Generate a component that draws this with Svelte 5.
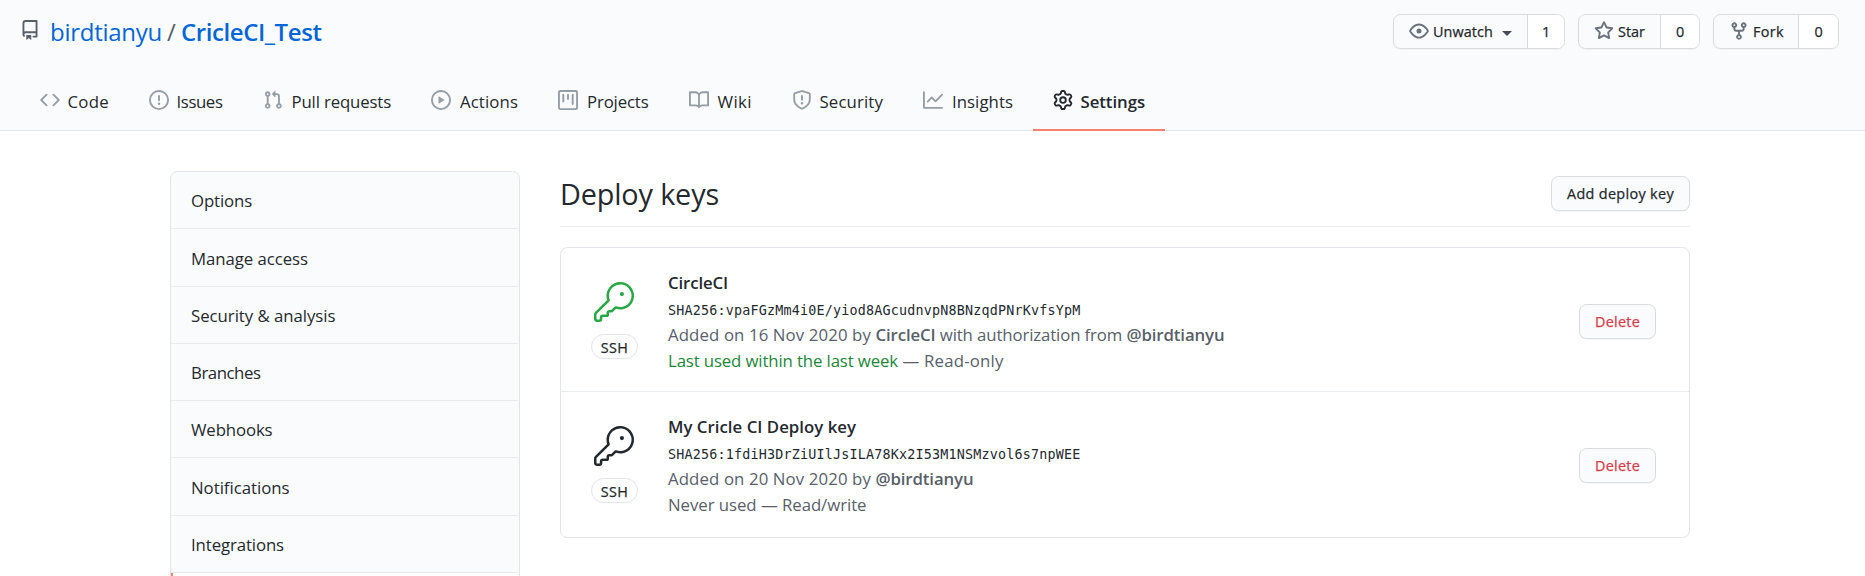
<script>
  // Adjusts tracking so that a label fills the given measure in pixels.
  function fit(node, measure) {
    node.style.letterSpacing = '0px';
    const natural = node.getBoundingClientRect().width;
    const spacing = (measure - natural) / node.textContent.length;
    node.style.letterSpacing = `${spacing.toFixed(4)}px`;
  }

  const icons = {
    repo: 'M2 2.5A2.5 2.5 0 014.5 0h8.75a.75.75 0 01.75.75v12.5a.75.75 0 01-.75.75h-2.5a.75.75 0 110-1.5h1.75v-2h-8a1 1 0 00-.714 1.7.75.75 0 01-1.072 1.05A2.495 2.495 0 012 11.5v-9zm10.5-1V9h-8c-.356 0-.694.074-1 .208V2.5a1 1 0 011-1h8zM5 12.25v3.25a.25.25 0 00.4.2l1.45-1.087a.25.25 0 01.3 0L8.6 15.7a.25.25 0 00.4-.2v-3.25a.25.25 0 00-.25-.25h-3.5a.25.25 0 00-.25.25z',
    code: 'M4.72 3.22a.75.75 0 011.06 1.06L2.06 8l3.72 3.72a.75.75 0 11-1.06 1.06L.47 8.53a.75.75 0 010-1.06l4.25-4.25zm6.56 0a.75.75 0 10-1.06 1.06L13.94 8l-3.72 3.72a.75.75 0 101.06 1.06l4.25-4.25a.75.75 0 000-1.06l-4.25-4.25z',
    issue: 'M8 1.5a6.5 6.5 0 100 13 6.5 6.5 0 000-13zM0 8a8 8 0 1116 0A8 8 0 010 8zm9 3a1 1 0 11-2 0 1 1 0 012 0zm-.25-6.25a.75.75 0 00-1.5 0v3.5a.75.75 0 001.5 0v-3.5z',
    pull: 'M7.177 3.073L9.573.677A.25.25 0 0110 .854v4.792a.25.25 0 01-.427.177L7.177 3.427a.25.25 0 010-.354zM3.75 2.5a.75.75 0 100 1.5.75.75 0 000-1.5zm-2.25.75a2.25 2.25 0 113 2.122v5.256a2.251 2.251 0 11-1.5 0V5.372A2.25 2.25 0 011.5 3.25zM11 2.5h-1V4h1a1 1 0 011 1v5.628a2.251 2.251 0 101.5 0V5A2.5 2.5 0 0011 2.5zm1 10.25a.75.75 0 111.5 0 .75.75 0 01-1.5 0zM3.75 12a.75.75 0 100 1.5.75.75 0 000-1.5z',
    play: 'M1.5 8a6.5 6.5 0 1113 0 6.5 6.5 0 01-13 0zM8 0a8 8 0 100 16A8 8 0 008 0zM6.379 5.227A.25.25 0 006 5.442v5.117a.25.25 0 00.379.214l4.264-2.559a.25.25 0 000-.428L6.379 5.227z',
    project: 'M1.75 0A1.75 1.75 0 000 1.75v12.5C0 15.216.784 16 1.75 16h12.5A1.75 1.75 0 0016 14.25V1.75A1.75 1.75 0 0014.25 0H1.75zM1.5 1.75a.25.25 0 01.25-.25h12.5a.25.25 0 01.25.25v12.5a.25.25 0 01-.25.25H1.75a.25.25 0 01-.25-.25V1.75zM11.75 3a.75.75 0 00-.75.75v7.5a.75.75 0 001.5 0v-7.5a.75.75 0 00-.75-.75zm-8.25.75a.75.75 0 011.5 0v5.5a.75.75 0 01-1.5 0v-5.5zM8 3a.75.75 0 00-.75.75v3.5a.75.75 0 001.5 0v-3.5A.75.75 0 008 3z',
    book: 'M0 1.75A.75.75 0 01.75 1h4.253c1.227 0 2.317.59 3 1.501A3.744 3.744 0 0111.006 1h4.245a.75.75 0 01.75.75v10.5a.75.75 0 01-.75.75h-4.507a2.25 2.25 0 00-1.591.659l-.622.621a.75.75 0 01-1.06 0l-.622-.621A2.25 2.25 0 005.258 13H.75a.75.75 0 01-.75-.75V1.75zm8.755 3a2.25 2.25 0 012.25-2.25H14.5v9h-3.757c-.71 0-1.4.201-1.992.572l.004-7.322zm-1.504 7.324l.004-5.073-.002-2.253A2.25 2.25 0 005.003 2.5H1.5v9h3.757a3.75 3.75 0 011.994.574z',
    shield: 'M7.467.133a1.75 1.75 0 011.066 0l5.25 1.68A1.75 1.75 0 0115 3.48V7c0 1.566-.32 3.182-1.303 4.682-.983 1.498-2.585 2.813-5.032 3.855a1.7 1.7 0 01-1.33 0c-2.447-1.042-4.049-2.357-5.032-3.855C1.32 10.182 1 8.566 1 7V3.48a1.75 1.75 0 011.217-1.667l5.25-1.68zm.61 1.429a.25.25 0 00-.153 0l-5.25 1.68a.25.25 0 00-.174.238V7c0 1.358.275 2.666 1.057 3.86.784 1.194 2.121 2.34 4.366 3.297a.2.2 0 00.154 0c2.245-.956 3.582-2.104 4.366-3.298C13.225 9.666 13.5 8.36 13.5 7V3.48a.25.25 0 00-.174-.237l-5.25-1.68zM9 10.5a1 1 0 11-2 0 1 1 0 012 0zm-.25-5.75a.75.75 0 10-1.5 0v3a.75.75 0 001.5 0v-3z',
    graph: 'M1.5 1.75a.75.75 0 00-1.5 0v12.5c0 .414.336.75.75.75h14.5a.75.75 0 000-1.5H1.5V1.75zm14.28 2.53a.75.75 0 00-1.06-1.06L10 7.94 7.53 5.47a.75.75 0 00-1.06 0L3.22 8.72a.75.75 0 001.06 1.06L7 7.06l2.47 2.47a.75.75 0 001.06 0l5.25-5.25z',
    gear: 'M7.429 1.525a6.593 6.593 0 011.142 0c.036.003.108.036.137.146l.289 1.105c.147.56.55.967.997 1.189.174.086.341.183.501.29.417.278.97.423 1.53.27l1.102-.303c.11-.03.175.016.195.046.219.31.41.641.573.989.014.031.022.11-.059.19l-.815.806c-.411.406-.562.957-.53 1.456a4.588 4.588 0 010 .582c-.032.499.119 1.05.53 1.456l.815.806c.08.08.073.159.059.19a6.494 6.494 0 01-.573.99c-.02.029-.086.074-.195.045l-1.103-.303c-.559-.153-1.112-.008-1.529.27-.16.107-.327.204-.5.29-.449.222-.851.628-.998 1.189l-.289 1.105c-.029.11-.101.143-.137.146a6.613 6.613 0 01-1.142 0c-.036-.003-.108-.037-.137-.146l-.289-1.105c-.147-.56-.55-.967-.997-1.189a4.502 4.502 0 01-.501-.29c-.417-.278-.97-.423-1.53-.27l-1.102.303c-.11.03-.175-.016-.195-.046a6.492 6.492 0 01-.573-.989c-.014-.031-.022-.11.059-.19l.815-.806c.411-.406.562-.957.53-1.456a4.587 4.587 0 010-.582c.032-.499-.119-1.05-.53-1.456l-.815-.806c-.08-.08-.073-.159-.059-.19a6.44 6.44 0 01.573-.99c.02-.029.086-.075.195-.045l1.103.303c.559.153 1.112.008 1.529-.27.16-.107.327-.204.5-.29.449-.222.851-.628.998-1.189l.289-1.105c.029-.11.101-.143.137-.146zM8 0c-.236 0-.47.01-.701.03-.743.065-1.29.615-1.458 1.261l-.29 1.106c-.017.066-.078.158-.211.224a5.994 5.994 0 00-.668.386c-.123.082-.233.09-.3.071L3.27 2.776c-.644-.177-1.392.02-1.82.63a7.977 7.977 0 00-.704 1.217c-.315.675-.111 1.422.363 1.891l.815.806c.05.048.098.147.088.294a6.084 6.084 0 000 .772c.01.147-.038.246-.088.294l-.815.806c-.474.469-.678 1.216-.363 1.891.2.428.436.835.704 1.218.428.609 1.176.806 1.82.63l1.103-.303c.066-.019.176-.011.299.071.213.143.436.272.668.386.133.066.194.158.212.224l.289 1.106c.169.646.715 1.196 1.458 1.26a8.094 8.094 0 001.402 0c.743-.064 1.29-.614 1.458-1.26l.29-1.106c.017-.066.078-.158.211-.224a5.98 5.98 0 00.668-.386c.123-.082.233-.09.3-.071l1.102.302c.644.177 1.392-.02 1.82-.63.268-.382.505-.789.704-1.217.315-.675.111-1.422-.364-1.891l-.814-.806c-.05-.048-.098-.147-.088-.294a6.1 6.1 0 000-.772c-.01-.147.039-.246.088-.294l.814-.806c.475-.469.679-1.216.364-1.891a7.992 7.992 0 00-.704-1.218c-.428-.609-1.176-.806-1.82-.63l-1.103.303c-.066.019-.176.011-.299-.071a5.991 5.991 0 00-.668-.386c-.133-.066-.194-.158-.212-.224L10.16 1.29C9.99.645 9.444.095 8.701.031A8.094 8.094 0 008 0zm1.5 8a1.5 1.5 0 11-3 0 1.5 1.5 0 013 0zM11 8a3 3 0 11-6 0 3 3 0 016 0z',
    eye: 'M1.679 7.932c.412-.621 1.242-1.75 2.366-2.717C5.175 4.242 6.527 3.5 8 3.5c1.473 0 2.824.742 3.955 1.715 1.124.967 1.954 2.096 2.366 2.717a.119.119 0 010 .136c-.412.621-1.242 1.75-2.366 2.717C10.825 11.758 9.473 12.5 8 12.5c-1.473 0-2.824-.742-3.955-1.715C2.92 9.818 2.09 8.69 1.679 8.068a.119.119 0 010-.136zM8 2c-1.981 0-3.67.992-4.933 2.078C1.797 5.169.88 6.423.43 7.1a1.619 1.619 0 000 1.798c.45.678 1.367 1.932 2.637 3.024C4.329 13.008 6.019 14 8 14c1.981 0 3.67-.992 4.933-2.078 1.27-1.091 2.187-2.345 2.637-3.023a1.619 1.619 0 000-1.798c-.45-.678-1.367-1.932-2.637-3.023C11.671 2.992 9.981 2 8 2zm0 8a2 2 0 100-4 2 2 0 000 4z',
    star: 'M8 .25a.75.75 0 01.673.418l1.882 3.815 4.21.612a.75.75 0 01.416 1.279l-3.046 2.97.719 4.192a.75.75 0 01-1.088.791L8 12.347l-3.766 1.98a.75.75 0 01-1.088-.79l.72-4.194L.818 6.374a.75.75 0 01.416-1.28l4.21-.611L7.327.668A.75.75 0 018 .25zm0 2.445L6.615 5.5a.75.75 0 01-.564.41l-3.097.45 2.24 2.184a.75.75 0 01.216.664l-.528 3.084 2.769-1.456a.75.75 0 01.698 0l2.77 1.456-.53-3.084a.75.75 0 01.216-.664l2.24-2.183-3.096-.45a.75.75 0 01-.564-.41L8 2.694v.001z',
    fork: 'M5 3.25a.75.75 0 11-1.5 0 .75.75 0 011.5 0zm0 2.122a2.25 2.25 0 10-1.5 0v.878A2.25 2.25 0 005.75 8.5h1.5v2.128a2.251 2.251 0 101.5 0V8.5h1.5a2.25 2.25 0 002.25-2.25v-.878a2.25 2.25 0 10-1.5 0v.878a.75.75 0 01-.75.75h-4.5A.75.75 0 015 6.25v-.878zm3.75 7.378a.75.75 0 11-1.5 0 .75.75 0 011.5 0zm3-8.75a.75.75 0 100-1.5.75.75 0 000 1.5z',
    key: 'M16.75 8.5a1.25 1.25 0 100-2.5 1.25 1.25 0 000 2.5zM15.75 0a8.25 8.25 0 00-7.851 10.79L.513 18.178A1.75 1.75 0 000 19.414v2.836C0 23.217.784 24 1.75 24h1.5A1.75 1.75 0 005 22.25v-1a.25.25 0 01.25-.25h2.735a.75.75 0 00.545-.22l.214-.213A.875.875 0 009 19.948V18.5a.25.25 0 01.25-.25h1.086c.464 0 .91-.184 1.237-.513l1.636-1.636A8.25 8.25 0 1015.75 0zM9 8.25a6.75 6.75 0 114.288 6.287.75.75 0 00-.804.168l-1.971 1.972a.25.25 0 01-.177.073H9.25A1.75 1.75 0 007.5 18.5v1H5.25a1.75 1.75 0 00-1.75 1.75v1a.25.25 0 01-.25.25h-1.5a.25.25 0 01-.25-.25v-2.836a.25.25 0 01.073-.177l7.722-7.721a.75.75 0 00.168-.804A6.73 6.73 0 019 8.25z'
  };

  const tabs = [
    { label: 'Code', icon: 'code', measure: 41.5 },
    { label: 'Issues', icon: 'issue', measure: 46 },
    { label: 'Pull requests', icon: 'pull', measure: 99.5, inset: true },
    { label: 'Actions', icon: 'play', measure: 58, inset: true },
    { label: 'Projects', icon: 'project', measure: 61.5, inset: true },
    { label: 'Wiki', icon: 'book', measure: 34.5, inset: true },
    { label: 'Security', icon: 'shield', measure: 63.5 },
    { label: 'Insights', icon: 'graph', measure: 61, inset: true },
    { label: 'Settings', icon: 'gear', measure: 64.5, current: true }
  ];

  const actions = [
    { kind: 'watch', label: 'Unwatch', icon: 'eye', measure: 60, count: 1, caret: true },
    { kind: 'star', label: 'Star', icon: 'star', measure: 27, count: 0 },
    { kind: 'fork', label: 'Fork', icon: 'fork', measure: 31, count: 0 }
  ];

  const menu = [
    { label: 'Options', measure: 61 },
    { label: 'Manage access', measure: 117 },
    { label: 'Security & analysis', measure: 144.5 },
    { label: 'Branches', measure: 69.5 },
    { label: 'Webhooks', measure: 81.5 },
    { label: 'Notifications', measure: 98.5 },
    { label: 'Integrations', measure: 93 }
  ];

  const keys = [
    {
      title: 'CircleCI', measure: 60, active: true,
      hash: 'SHA256:vpaFGzMm4i0E/yiod8AGcudnvpN8BNzqdPNrKvfsYpM',
      added: [
        { text: 'Added on 16 Nov 2020 by ', measure: 207.5 },
        { text: 'CircleCI', measure: 60, bold: true },
        { text: ' with authorization from ', measure: 191 },
        { text: '@birdtianyu', measure: 98, bold: true }
      ],
      usage: [
        { text: 'Last used within the last week', measure: 230, recent: true },
        { text: ' — Read-only', measure: 105.5 }
      ]
    },
    {
      title: 'My Cricle CI Deploy key', measure: 188,
      hash: 'SHA256:1fdiH3DrZiUIlJsILA78Kx2I53M1NSMzvol6s7npWEE',
      added: [
        { text: 'Added on 20 Nov 2020 by ', measure: 207.5 },
        { text: '@birdtianyu', measure: 98, bold: true }
      ],
      usage: [{ text: 'Never used — Read/write', measure: 198.5 }]
    }
  ];
</script>

{#snippet octicon(name)}
  <svg class="icon" viewBox="0 0 16 16" aria-hidden="true"><path fill-rule="evenodd" d={icons[name]} /></svg>
{/snippet}

<div class="page">
  <header>
    <div class="top">
      <h1>
        {@render octicon('repo')}
        <a href="#owner" use:fit={112}>birdtianyu</a>
        <span class="slash">/</span>
        <a class="repo" href="#repo" use:fit={140.5}>CricleCI_Test</a>
      </h1>
      <div class="actions">
        {#each actions as a}
          <div class="split {a.kind}">
            <button>
              {@render octicon(a.icon)}
              <span use:fit={a.measure}>{a.label}</span>
              {#if a.caret}<i class="caret"></i>{/if}
            </button>
            <a class="count" href="#{a.kind}">{a.count}</a>
          </div>
        {/each}
      </div>
    </div>
    <nav>
      {#each tabs as t}
        <a class="tab" class:current={t.current} class:inset={t.inset} href="#{t.label}">
          {@render octicon(t.icon)}
          <span use:fit={t.measure}>{t.label}</span>
        </a>
      {/each}
    </nav>
  </header>

  <div class="body">
    <aside>
      {#each menu as m}
        <a href="#{m.label}"><span use:fit={m.measure}>{m.label}</span></a>
      {/each}
      <a class="selected" href="#keys" aria-label="Deploy keys"></a>
    </aside>

    <main>
      <div class="subhead">
        <h2><span use:fit={159}>Deploy keys</span></h2>
        <button class="btn add"><span use:fit={107}>Add deploy key</span></button>
      </div>
      <ul>
        {#each keys as k}
          <li>
            <div class="badge" class:active={k.active}>
              <svg viewBox="0 0 24 24" aria-hidden="true"><path fill-rule="evenodd" d={icons.key} /></svg>
              <span class="pill"><span use:fit={27.5}>SSH</span></span>
            </div>
            <div class="info">
              <strong><span use:fit={k.measure}>{k.title}</span></strong>
              <code><span use:fit={412.5}>{k.hash}</span></code>
              <p>{#each k.added as s}<span class:bold={s.bold} use:fit={s.measure}>{s.text}</span>{/each}</p>
              <p>{#each k.usage as s}<span class:recent={s.recent} use:fit={s.measure}>{s.text}</span>{/each}</p>
            </div>
            <button class="btn delete"><span use:fit={45}>Delete</span></button>
          </li>
        {/each}
      </ul>
    </main>
  </div>
</div>

<style>
  :global(body) { margin: 0; background: #fff; }
  .page {
    height: 576px;
    overflow: hidden;
    color: #24292e;
    font: 400 16.8px/26px 'Open Sans', 'Noto Sans', sans-serif;
  }
  .page :global(*) { box-sizing: border-box; }
  a { color: inherit; text-decoration: none; }
  span { white-space: pre; }
  svg { display: block; flex: none; fill: currentColor; }
  .icon { width: 20px; height: 20px; }
  button { font: inherit; color: inherit; margin: 0; padding: 0; cursor: pointer; }

  header {
    height: 131px;
    display: flex;
    flex-direction: column;
    justify-content: space-between;
    background: #fafbfc;
    border-bottom: 1px solid #e1e4e8;
  }
  .top { display: flex; justify-content: space-between; padding: 14px 26px 0 20px; }
  h1 { display: flex; margin: 0; font-size: 24px; font-weight: 400; line-height: 36px; color: #0366d6; }
  h1 .icon { color: #586069; margin: 6px 10px 0 0; }
  .slash { color: #586069; width: 19px; text-align: center; }
  .repo { font-weight: 600; }

  .actions { display: flex; gap: 13px; }
  .split {
    display: flex;
    height: 35px;
    border: 1px solid #d9dcde;
    border-radius: 7.5px;
    background: #fafbfc;
    box-shadow: 0 1px 0 rgba(27, 31, 35, 0.04);
    overflow: hidden;
    font-size: 14.4px;
    line-height: 33px;
    -webkit-text-stroke: 0.25px;
  }
  .split button { flex: 1; display: flex; align-items: center; padding-left: 15px; border: 0; background: none; }
  .split .icon { color: #6a737d; margin-right: 4px; margin-top: -2px; }
  .watch { width: 172px; }
  .star { width: 122px; }
  .fork { width: 126px; }
  .caret { margin: 3px 0 0 9px; border: 5px solid transparent; border-top-color: #444b52; border-bottom: 0; }
  .count { width: 37px; border-left: 1px solid #d9dcde; background: #fff; text-align: center; }
  .star .count { width: 39px; }
  .fork .count { width: 40px; }

  nav { display: flex; padding-left: 20px; margin-bottom: -1px; }
  .tab { display: flex; height: 48px; padding: 7px 20px 0; border-bottom: 2px solid transparent; }
  .tab span { margin-top: -1px; }
  .tab .icon { color: #959da5; margin-right: 7.5px; }
  .tab.inset .icon { margin-right: 9px; }
  .tab.current { font-weight: 600; border-color: #f9826c; }
  .tab.current .icon { color: #24292e; }

  .body { display: grid; grid-template-columns: 350px 1130px; gap: 40px; padding: 40px 0 0 170px; }
  aside {
    height: 480px;
    border: 1px solid #e1e4e8;
    border-radius: 7.5px;
    background: #fafbfc;
    overflow: hidden;
  }
  aside a { display: block; height: 57.25px; margin-right: 1px; padding: 16.35px 0 0 20px; line-height: 26px; border-bottom: 1px solid #e8ebee; }
  aside .selected { margin-right: 0; background: #fff; border-left: 2px solid #f9826c; }

  .subhead { display: flex; justify-content: space-between; height: 56px; padding-top: 5px; border-bottom: 1px solid #eaecef; }
  h2 { margin: 0; font-size: 28.8px; font-weight: 400; line-height: 36px; }
  .btn {
    height: 35px;
    border: 1px solid #d9dcde;
    border-radius: 7.5px;
    background: #fafbfc;
    box-shadow: 0 1px 0 rgba(27, 31, 35, 0.04);
    font-size: 14.4px;
    line-height: 33px;
    -webkit-text-stroke: 0.25px;
  }
  .add { width: 139px; }
  .delete { width: 77px; margin: 56px 33px 0 auto; color: #d73a49; }

  ul { list-style: none; margin: 20px 0 0; padding: 0; border: 1px solid #e1e4e8; border-radius: 7.5px; }
  li { display: flex; align-items: flex-start; height: 145px; padding-left: 30px; }
  li:first-child { height: 144px; border-bottom: 1px solid #e8ebee; }
  .badge { display: flex; flex-direction: column; gap: 12px; width: 47px; padding-top: 34px; }
  .badge svg { width: 40px; height: 40px; margin-left: 3px; }
  .badge.active svg { color: #28a745; }
  .pill {
    width: 47px;
    height: 25px;
    border: 1px solid #e1e4e8;
    border-radius: 13px;
    font-size: 14.4px;
    line-height: 25px;
    text-align: center;
    -webkit-text-stroke: 0.25px;
  }
  .info { padding: 22px 0 0 30px; color: #586069; }
  .info strong { display: block; font-weight: 600; color: #24292e; }
  code { display: block; padding-top: 3px; line-height: 23px; font-family: 'DejaVu Sans Mono', monospace; font-size: 13.4px; color: #24292e; }
  p { margin: 0; }
  .bold { font-weight: 600; }
  .recent { color: #22863a; }
</style>
